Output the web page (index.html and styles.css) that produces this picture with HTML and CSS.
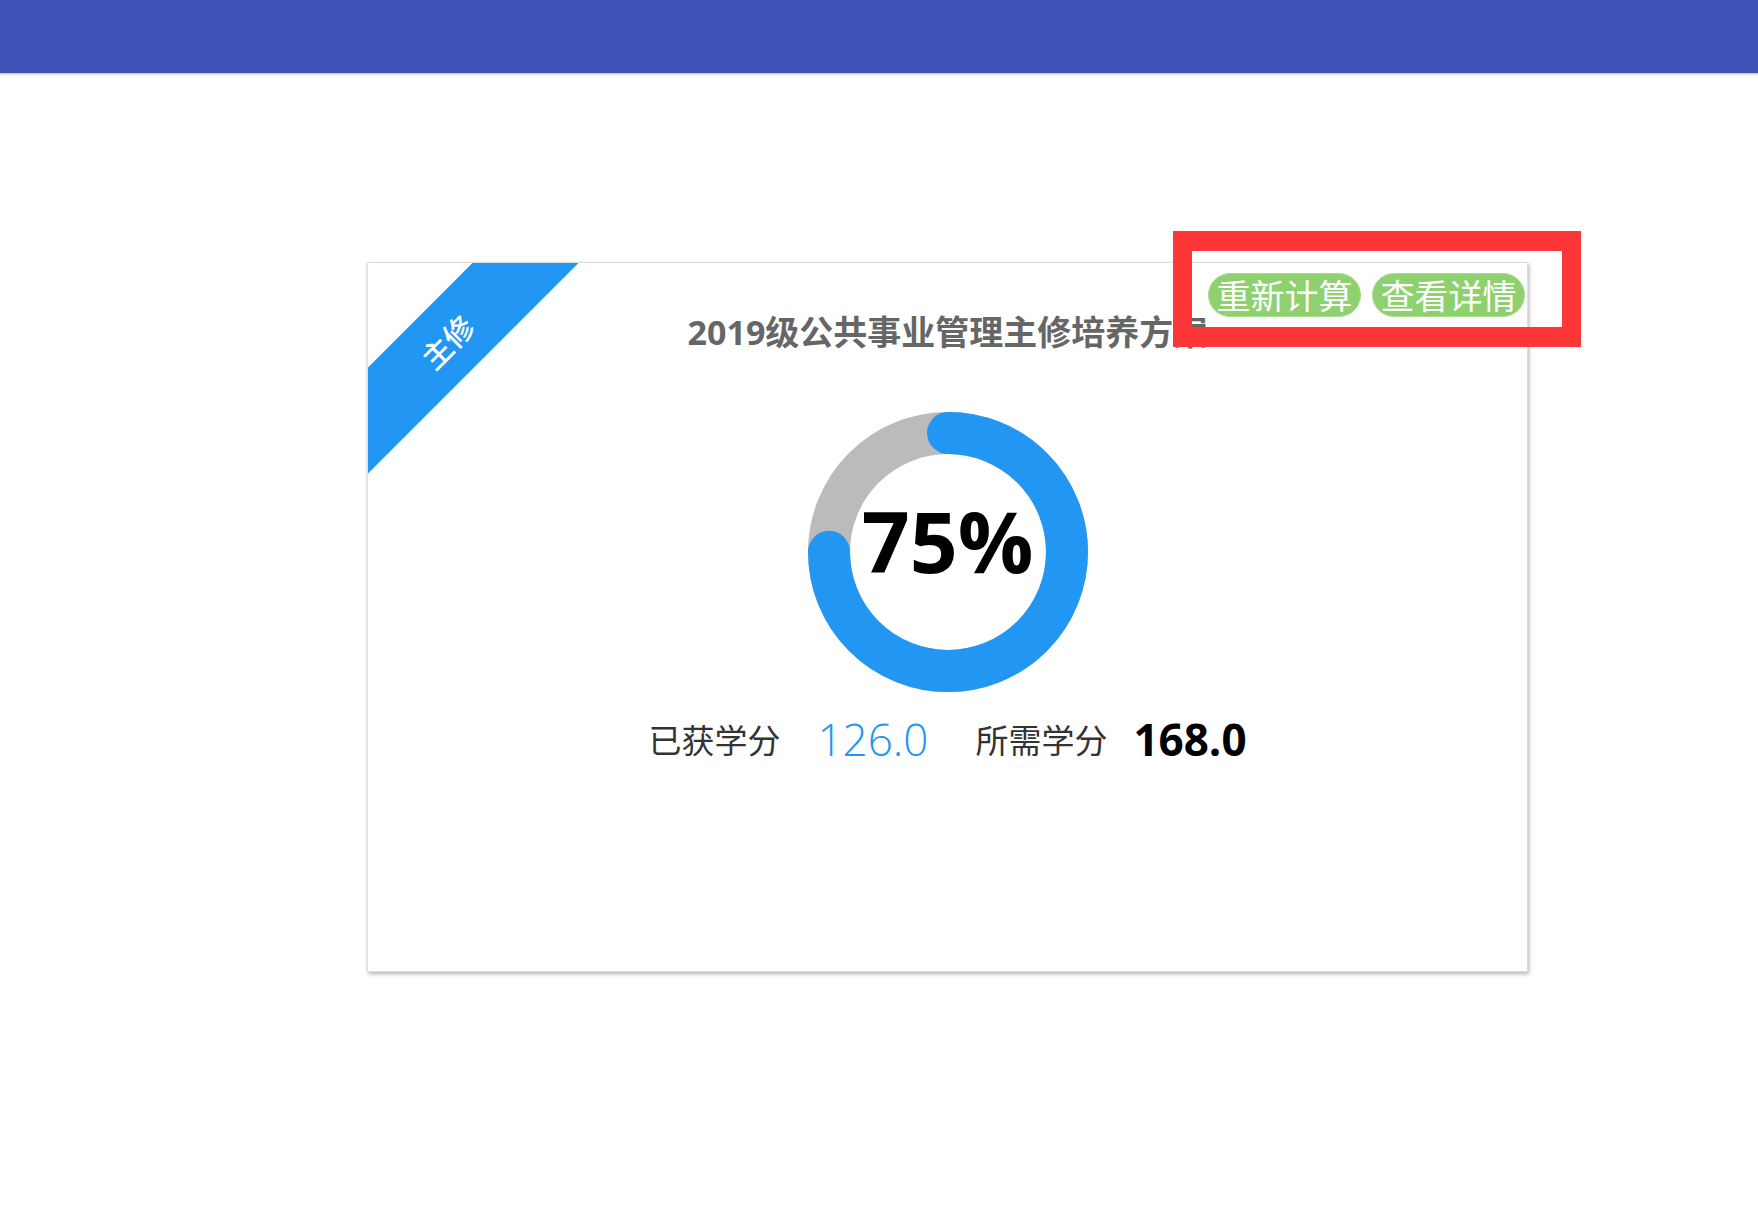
FILE: index.html
```html
<!DOCTYPE html>
<html lang="zh-CN">
<head>
    <meta charset="UTF-8">
    <meta name="viewport" content="width=device-width, initial-scale=1.0">
    <title>培养方案</title>
    <link rel="stylesheet" href="styles.css">
</head>
<body>
    <header class="topbar"></header>

    <main class="page">
        <section class="plan-card">
            <div class="corner">
                <div class="ribbon">主修</div>
            </div>

            <div class="card-actions">
                <button class="pill">重新计算</button>
                <button class="pill">查看详情</button>
            </div>

            <h2 class="card-title">2019级公共事业管理主修培养方案</h2>

            <div class="donut">
                <svg viewBox="0 0 280 280" width="280" height="280">
                    <circle cx="140" cy="140" r="119" fill="none" stroke="#bbbbbb" stroke-width="42"/>
                    <circle cx="140" cy="140" r="119" fill="none" stroke="#2196f3" stroke-width="42"
                            stroke-linecap="round" stroke-dasharray="560.8 747.7"
                            transform="rotate(-90 140 140)"/>
                </svg>
                <span class="donut-label">75%</span>
            </div>

            <div class="stats">
                <span class="stat-name">已获学分</span>
                <span class="stat-value earned">126.0</span>
                <span class="stat-name">所需学分</span>
                <span class="stat-value required">168.0</span>
            </div>

            <!-- highlight box around the action buttons -->
            <div class="highlight"></div>
        </section>
    </main>
</body>
</html>
```

FILE: styles.css
```css
body {
    margin: 0;
    padding: 0;
    background-color: #fff;
    font-family: "Open Sans", "Noto Sans CJK SC", sans-serif;
    color: #333;
}

.topbar {
    height: 73px;
    background-color: #3f51b5;
    box-shadow: 0 1px 2px rgba(63, 81, 181, 0.45);
}

.page {
    padding: 189px 0 120px 367px;
}

.plan-card {
    position: relative;
    box-sizing: border-box;
    width: 1161px;
    height: 710px;
    background: white;
    border: 1px solid #dedede;
    box-shadow: 1px 2px 4px rgba(0, 0, 0, 0.3);
    display: flex;
    flex-direction: column;
    align-items: center;
}

.corner {
    position: absolute;
    top: 0;
    left: 0;
    width: 240px;
    height: 240px;
    overflow: hidden;
}

.ribbon {
    position: absolute;
    left: -71px;
    top: 41px;
    width: 300px;
    height: 75px;
    line-height: 75px;
    background-color: #2196f3;
    color: white;
    text-align: center;
    font-family: "Noto Sans CJK SC", sans-serif;
    font-size: 30px;
    font-weight: 500;
    transform: rotate(-45deg);
}

.card-actions {
    align-self: stretch;
    display: flex;
    justify-content: flex-end;
    gap: 11px;
    padding: 10px 2px 0;
}

.pill {
    height: 44px;
    width: 153px;
    padding: 0;
    border: 1px solid #a9dc90;
    border-radius: 22px;
    background-color: #8fd16f;
    color: white;
    font-family: "Noto Sans CJK SC", sans-serif;
    font-size: 34px;
    font-weight: 400;
    line-height: 40px;
    cursor: pointer;
}

.card-title {
    margin: -5px 0 0;
    font-size: 34px;
    line-height: 40px;
    font-weight: bold;
    color: #666;
}

.donut {
    margin-top: 60px;
    width: 280px;
    height: 280px;
    display: grid;
    place-items: center;
}

.donut svg,
.donut-label {
    grid-area: 1 / 1;
}

.donut-label {
    padding-bottom: 24px;
    font-size: 84px;
    font-weight: bold;
    color: #000;
}

.stats {
    margin-top: 22px;
    height: 50px;
    display: flex;
    align-items: center;
}

.stat-name {
    font-family: "Noto Sans CJK SC", sans-serif;
    font-size: 33px;
    font-weight: 400;
    color: #333;
}

.stat-value {
    font-size: 44px;
}

.earned {
    margin: 0 47px 0 37px;
    color: #2196f3;
    font-weight: 300;
}

.required {
    margin-left: 26px;
    color: #000;
    font-weight: bold;
}

.highlight {
    position: absolute;
    left: 805px;
    top: -32px;
    width: 408px;
    height: 116px;
    box-sizing: border-box;
    border: 20px solid #fd3737;
    border-left-width: 19px;
    border-right-width: 19px;
}
```
